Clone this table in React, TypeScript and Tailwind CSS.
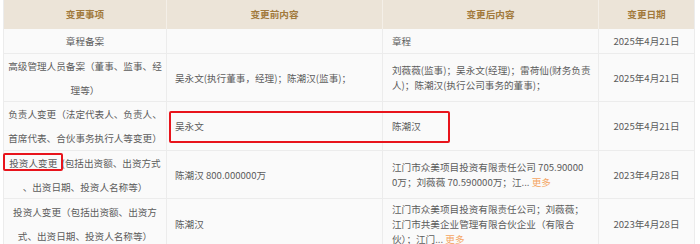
const rows = [
  {
    h: 'h-[25px]',
    item: ['章程备案'],
    before: [],
    after: ['章程'],
    date: '2025年4月21日',
  },
  {
    h: 'h-[48px]',
    item: ['高级管理人员备案（董事、监事、经', '理等）'],
    before: ['吴永文(执行董事，经理)；陈潮汉(监事)；'],
    after: ['刘薇薇(监事)；吴永文(经理)；雷荷仙(财务负责', '人)；陈潮汉(执行公司事务的董事)；'],
    date: '2025年4月21日',
  },
  {
    h: 'h-[49px]',
    item: ['负责人变更（法定代表人、负责人、', '首席代表、合伙事务执行人等变更）'],
    before: ['吴永文'],
    after: ['陈潮汉'],
    date: '2025年4月21日',
  },
  {
    h: 'h-[48px]',
    item: ['投资人变更  (包括出资额、出资方式', '、出资日期、投资人名称等）'],
    before: ['陈潮汉 800.000000万'],
    after: ['江门市众美项目投资有限责任公司 705.90000', '0万；刘薇薇 70.590000万；江...'],
    more: true,
    date: '2023年4月28日',
  },
  {
    h: 'h-[51px]',
    item: ['投资人变更（包括出资额、出资方', '式、出资日期、投资人名称等）'],
    before: ['陈潮汉'],
    after: ['江门市众美项目投资有限责任公司；刘薇薇；', '江门市共美企业管理有限合伙企业（有限合', '伙）；江门...'],
    more: true,
    date: '2023年4月28日',
  },
];

export default function App() {
  return (
    <div className="relative w-[700px] h-[244px] overflow-hidden bg-white text-[9.6px] text-[#5c5c5c] font-['Noto_Sans_CJK_SC',sans-serif]">
      <div className="ml-[3px] w-[692px] border-x border-[#ececec]">
        {/* Header */}
        <div className="grid grid-cols-[162px_216px_216px_96px] h-[29px] bg-[#ece4d8] font-bold text-[#a27a3c]">
          <div className="flex items-center justify-center">变更事项</div>
          <div className="flex items-center justify-center border-l border-[#f4efe8]">变更前内容</div>
          <div className="flex items-center justify-center border-l border-[#f4efe8]">变更后内容</div>
          <div className="flex items-center justify-center border-l border-[#f4efe8]">变更日期</div>
        </div>

        {/* Body */}
        {rows.map((row, i) => (
          <div
            key={i}
            className={`grid grid-cols-[162px_216px_216px_96px] ${row.h} bg-[#fafafa] border-b border-[#ececec]`}
          >
            <div className="flex flex-col items-center justify-center text-center leading-[24px] whitespace-pre">
              {row.item.map((line) => (
                <span key={line}>{line}</span>
              ))}
            </div>
            <div className="flex flex-col justify-center pl-[8px] leading-[15px] border-l border-[#ececec] whitespace-nowrap">
              {row.before.map((line) => (
                <span key={line}>{line}</span>
              ))}
            </div>
            <div className="flex flex-col justify-center pl-[9px] leading-[15px] border-l border-[#ececec] whitespace-nowrap">
              {row.after.map((line, j) => (
                <span key={line}>
                  {line}
                  {row.more && j === row.after.length - 1 && (
                    <span className="text-[#f5a562]"> 更多</span>
                  )}
                </span>
              ))}
            </div>
            <div className="flex items-center justify-center border-l border-[#ececec] whitespace-nowrap">
              {row.date}
            </div>
          </div>
        ))}
      </div>

      {/* Annotation boxes */}
      <div className="absolute left-[169px] top-[111px] w-[281px] h-[32px] border-2 border-[#e8141c] rounded-[2px]" />
      <div className="absolute left-[3px] top-[153px] w-[60px] h-[18px] border-2 border-[#e8141c] rounded-[2px]" />
    </div>
  );
}
